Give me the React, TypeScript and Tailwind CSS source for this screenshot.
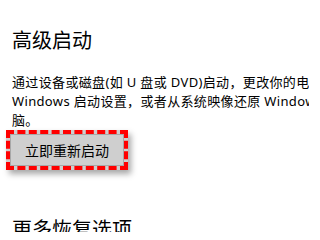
import React from "react";

export default function App() {
  return (
    <div
      className="w-[309px] h-[232px] overflow-hidden bg-white pl-[12px] text-black"
      style={{ fontFamily: '"Noto Sans", "Noto Sans CJK SC", sans-serif' }}
    >
      <h2 className="pt-[28px] text-[20px] leading-[26px] font-normal whitespace-nowrap">高级启动</h2>
      <div className="mt-[19px] text-[13px] leading-[19px] whitespace-nowrap tracking-[0.35px]">
        <p>通过设备或磁盘(如 U 盘或 DVD)启动，更改你的电脑的固件设置，更改</p>
        <p>Windows 启动设置，或者从系统映像还原 Windows。这将重新启动电</p>
        <p>脑。</p>
      </div>
      <div className="ml-[-6px] w-[122px] h-[40px] border-4 border-dashed border-[#ff0000] bg-[#cfcfcf] shadow-[3px_4px_6px_rgba(0,0,0,0.35)]">
        <div className="w-full h-full border border-[#a8a8a8] flex items-center justify-center pt-[2px] text-[14px] leading-[18px] whitespace-nowrap">
          立即重新启动
        </div>
      </div>
      <h2 className="mt-[47px] text-[20px] leading-[26px] font-normal whitespace-nowrap">更多恢复选项</h2>
    </div>
  );
}
